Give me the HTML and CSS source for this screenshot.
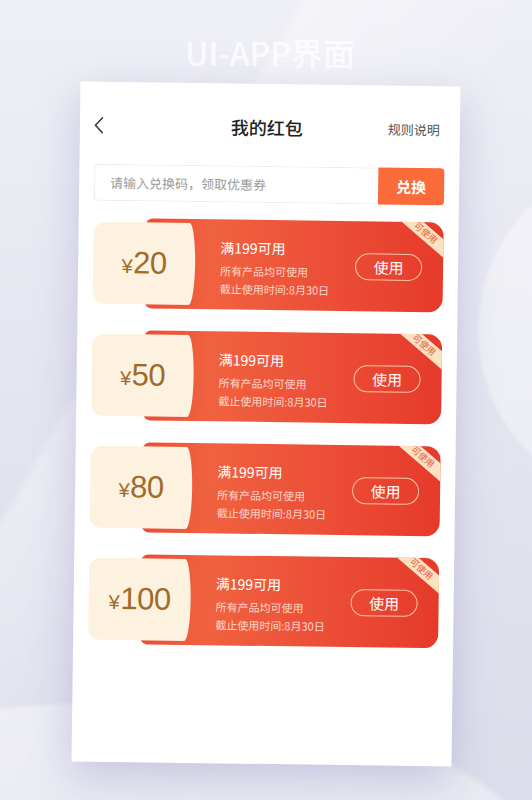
FILE: index.html
```html
<!DOCTYPE html>
<html lang="zh-CN">
<head>
    <meta charset="UTF-8">
    <meta name="viewport" content="width=device-width, initial-scale=1.0">
    <title>我的红包</title>
    <link rel="stylesheet" href="styles.css">
</head>
<body>
    <div class="page">
        <h1 class="banner">UI-APP界面</h1>

        <div class="phone">
            <header class="topbar">
                <button class="back" aria-label="返回">
                    <svg viewBox="0 0 10 17" width="10" height="17" fill="none" stroke="#333" stroke-width="1.5" stroke-linecap="round" stroke-linejoin="round"><path d="M8.5 1L1.5 8.5L8.5 16"/></svg>
                </button>
                <h2 class="topbar-title">我的红包</h2>
                <a class="rules" href="#">规则说明</a>
            </header>

            <!-- 兑换码输入 -->
            <form class="redeem">
                <input type="text" placeholder="请输入兑换码，领取优惠券">
                <button type="button">兑换</button>
            </form>

            <ul class="coupon-list">
                <li class="coupon">
                    <div class="coupon-value"><span class="yen">¥</span>20</div>
                    <div class="coupon-body">
                        <div class="coupon-info">
                            <p class="coupon-title">满199可用</p>
                            <p class="coupon-desc">所有产品均可使用</p>
                            <p class="coupon-desc">截止使用时间:8月30日</p>
                        </div>
                        <button class="use-btn">使用</button>
                        <span class="ribbon">可使用</span>
                    </div>
                </li>
                <li class="coupon">
                    <div class="coupon-value"><span class="yen">¥</span>50</div>
                    <div class="coupon-body">
                        <div class="coupon-info">
                            <p class="coupon-title">满199可用</p>
                            <p class="coupon-desc">所有产品均可使用</p>
                            <p class="coupon-desc">截止使用时间:8月30日</p>
                        </div>
                        <button class="use-btn">使用</button>
                        <span class="ribbon">可使用</span>
                    </div>
                </li>
                <li class="coupon">
                    <div class="coupon-value"><span class="yen">¥</span>80</div>
                    <div class="coupon-body">
                        <div class="coupon-info">
                            <p class="coupon-title">满199可用</p>
                            <p class="coupon-desc">所有产品均可使用</p>
                            <p class="coupon-desc">截止使用时间:8月30日</p>
                        </div>
                        <button class="use-btn">使用</button>
                        <span class="ribbon">可使用</span>
                    </div>
                </li>
                <li class="coupon">
                    <div class="coupon-value"><span class="yen">¥</span>100</div>
                    <div class="coupon-body">
                        <div class="coupon-info">
                            <p class="coupon-title">满199可用</p>
                            <p class="coupon-desc">所有产品均可使用</p>
                            <p class="coupon-desc">截止使用时间:8月30日</p>
                        </div>
                        <button class="use-btn">使用</button>
                        <span class="ribbon">可使用</span>
                    </div>
                </li>
            </ul>
        </div>
    </div>
</body>
</html>
```

FILE: styles.css
```css
/* 页面背景 */
body {
    margin: 0;
    font-family: "Noto Sans CJK SC", "Noto Sans", sans-serif;
    background-color: #e6e6f0;
    background-image:
        radial-gradient(circle at 650px 330px, rgba(255, 255, 255, 0.35) 0, rgba(255, 255, 255, 0.35) 170px, rgba(255, 255, 255, 0) 174px),
        radial-gradient(ellipse 420px 160px at 120px 860px, rgba(255, 255, 255, 0.4) 0, rgba(255, 255, 255, 0.4) 97%, rgba(255, 255, 255, 0) 100%),
        linear-gradient(120deg, rgba(255, 255, 255, 0) 30%, rgba(255, 255, 255, 0.3) 31%, rgba(255, 255, 255, 0) 55%),
        linear-gradient(180deg, #efeff6 0%, #e5e5f0 50%, #dcdcea 100%);
}

.page {
    width: 532px;
    height: 800px;
    overflow: hidden;
    display: flex;
    flex-direction: column;
    align-items: center;
    padding-top: 32px;
    box-sizing: border-box;
}

.banner {
    margin: 0;
    height: 40px;
    line-height: 40px;
    font-size: 32px;
    font-weight: 500;
    color: rgba(255, 255, 255, 0.82);
    padding-left: 8px;
}

/* 手机卡片 */
.phone {
    width: 380px;
    height: 680px;
    margin-top: 12px;
    background: #fff;
    box-shadow: 0 14px 40px rgba(130, 130, 185, 0.35);
    transform: rotate(0.76deg);
}

.topbar {
    display: grid;
    grid-template-columns: 1fr auto 1fr;
    align-items: center;
    height: 82px;
    padding: 4px 20px 0 14px;
    box-sizing: border-box;
}

.back {
    justify-self: start;
    border: none;
    background: none;
    padding: 0;
    display: flex;
}

.topbar-title {
    margin: 0;
    font-size: 18px;
    font-weight: 500;
    color: #222;
}

.rules {
    justify-self: end;
    font-size: 13px;
    color: #555;
    text-decoration: none;
}

/* 兑换码 */
.redeem {
    display: flex;
    height: 37px;
    margin: 0 15px;
}

.redeem input {
    flex: 1;
    min-width: 0;
    border: 1px solid #ececec;
    border-right: none;
    border-radius: 4px 0 0 4px;
    padding: 0 0 0 15px;
    font-family: inherit;
    font-size: 13px;
    color: #333;
    outline: none;
}

.redeem input::placeholder {
    color: #9b9b9b;
}

.redeem button {
    width: 66px;
    border: none;
    border-radius: 0 4px 4px 0;
    background: #fb6a39;
    color: #fff;
    font-family: inherit;
    font-size: 15px;
    font-weight: 700;
}

/* 红包列表 */
.coupon-list {
    list-style: none;
    margin: 17px 0 0;
    padding: 0 15px;
    display: flex;
    flex-direction: column;
    gap: 22px;
}

.coupon {
    display: flex;
    align-items: center;
    height: 90px;
}

.coupon-value {
    flex: none;
    width: 102px;
    height: 82px;
    position: relative;
    z-index: 1;
    display: flex;
    align-items: center;
    justify-content: center;
    background: #fdf1e0;
    border-radius: 12px 6px 6px 12px / 12px 41px 41px 12px;
    font-family: "Liberation Sans", Arial, sans-serif;
    font-size: 31px;
    color: #9e6b2b;
    letter-spacing: -0.5px;
}

.yen {
    font-size: 20px;
    margin-top: 6px;
    margin-right: 1px;
}

.coupon-body {
    flex: 1;
    height: 90px;
    margin-left: -50px;
    padding: 0 21px 0 75px;
    box-sizing: border-box;
    position: relative;
    overflow: hidden;
    display: flex;
    align-items: center;
    justify-content: space-between;
    border-radius: 7px 14px 14px 7px;
    background: linear-gradient(90deg, #ec4c35 0%, #f0623f 22%, #ec4f37 60%, #e63a2b 100%);
}

.coupon-info {
    align-self: flex-start;
    padding-top: 18px;
}

.coupon-info p {
    margin: 0;
}

.coupon-title {
    font-size: 14px;
    line-height: 20px;
    color: #fff;
    margin-bottom: 4px !important;
}

.coupon-desc {
    font-size: 11px;
    line-height: 18px;
    color: rgba(255, 236, 226, 0.85);
}

.use-btn {
    width: 67px;
    height: 27px;
    border: 1px solid #fbc6a8;
    border-radius: 14px;
    background: none;
    color: #fff;
    font-family: inherit;
    font-size: 15px;
    padding: 0;
}

.ribbon {
    position: absolute;
    top: 4px;
    right: -17px;
    width: 70px;
    height: 14px;
    line-height: 14px;
    text-align: center;
    font-size: 9px;
    color: #e4583c;
    background: #fde2c2;
    transform: rotate(40deg);
}
```
